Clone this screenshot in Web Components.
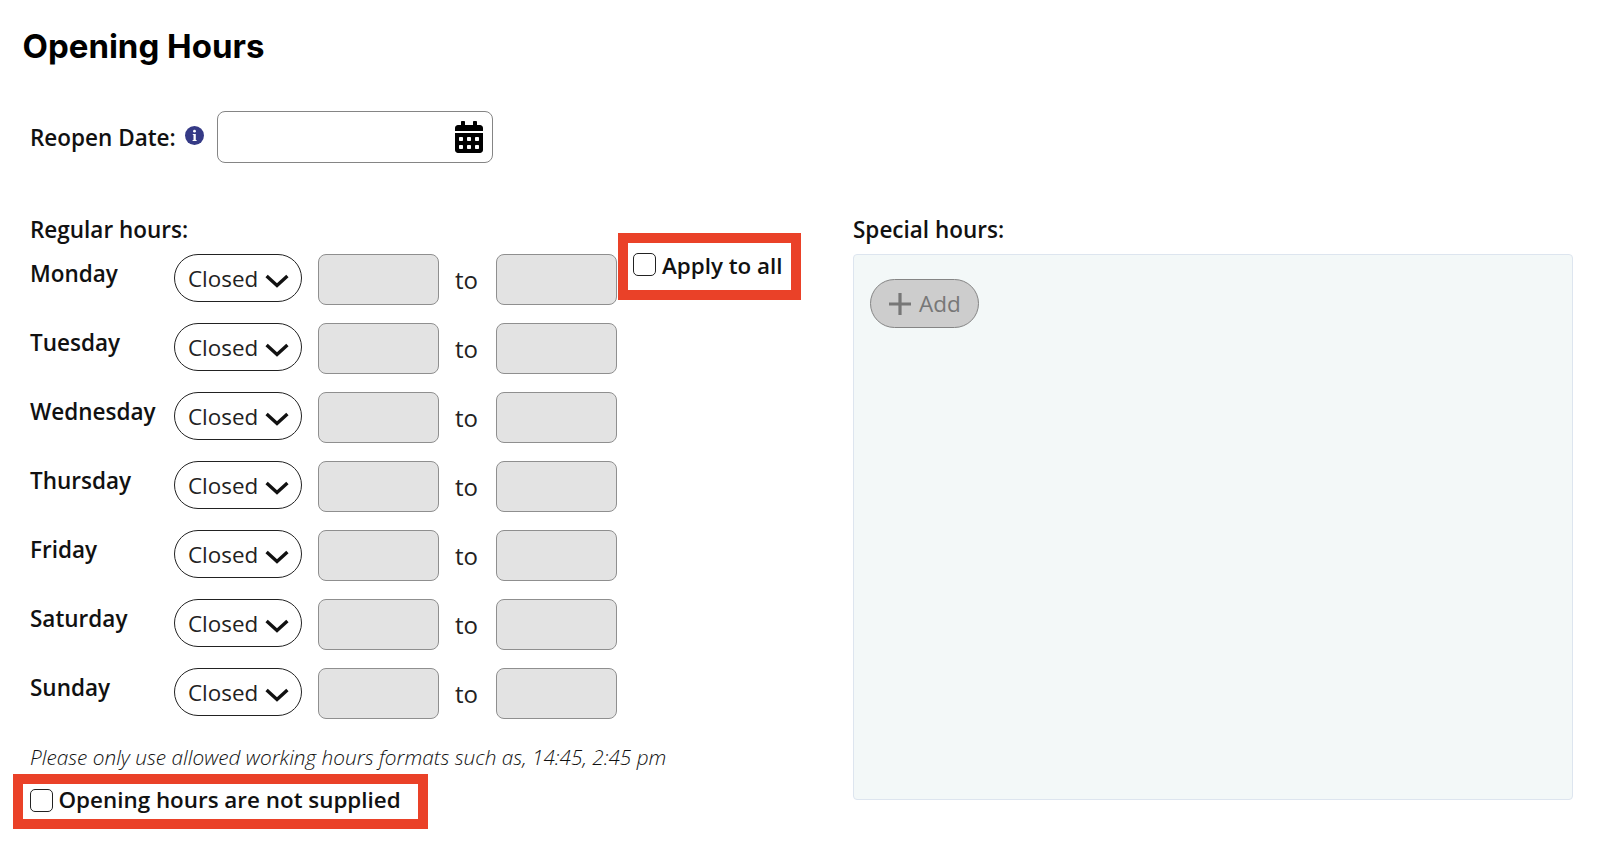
<!DOCTYPE html>
<html>
<head>
<meta charset="utf-8">
<title>Opening Hours</title>
<style>
  body { margin: 0; background: #fff; color: #111; font-family: "Open Sans", sans-serif; }
</style>
</head>
<body>
<opening-hours></opening-hours>
<script>
// small helper so each element gets its own open shadow root
function shadow(el, html) {
  el.attachShadow({ mode: 'open' });
  el.shadowRoot.innerHTML = html;
}

class DateField extends HTMLElement {
  connectedCallback() {
    shadow(this, `
      <style>
        :host { display: flex; align-items: center; justify-content: flex-end; box-sizing: border-box;
          width: 276px; height: 52px; padding-right: 9px; border: 1px solid #858585; border-radius: 8px; background: #fff; }
        svg { width: 28px; height: 32px; display: block; }
      </style>
      <svg viewBox="0 0 448 512"><path fill="#000" d="M0 464c0 26.5 21.5 48 48 48h352c26.5 0 48-21.5 48-48V192H0v272zm320-196c0-6.6 5.4-12 12-12h40c6.6 0 12 5.4 12 12v40c0 6.6-5.4 12-12 12h-40c-6.6 0-12-5.4-12-12v-40zm0 128c0-6.6 5.4-12 12-12h40c6.6 0 12 5.4 12 12v40c0 6.6-5.4 12-12 12h-40c-6.6 0-12-5.4-12-12v-40zM192 268c0-6.6 5.4-12 12-12h40c6.6 0 12 5.4 12 12v40c0 6.6-5.4 12-12 12h-40c-6.6 0-12-5.4-12-12v-40zm0 128c0-6.6 5.4-12 12-12h40c6.6 0 12 5.4 12 12v40c0 6.6-5.4 12-12 12h-40c-6.6 0-12-5.4-12-12v-40zM64 268c0-6.6 5.4-12 12-12h40c6.6 0 12 5.4 12 12v40c0 6.6-5.4 12-12 12H76c-6.6 0-12-5.4-12-12v-40zm0 128c0-6.6 5.4-12 12-12h40c6.6 0 12 5.4 12 12v40c0 6.6-5.4 12-12 12H76c-6.6 0-12-5.4-12-12v-40zM400 64h-48V16c0-8.8-7.2-16-16-16h-32c-8.8 0-16 7.2-16 16v48H160V16c0-8.8-7.2-16-16-16h-32c-8.8 0-16 7.2-16 16v48H48C21.5 64 0 85.5 0 112v48h448v-48c0-26.5-21.5-48-48-48z"/></svg>`);
  }
}

class InfoDot extends HTMLElement {
  connectedCallback() {
    shadow(this, `
      <style>
        :host { display: block; width: 19px; height: 19px; }
        svg { display: block; width: 19px; height: 19px; }
      </style>
      <svg viewBox="0 0 19 19">
        <circle cx="9.5" cy="9.5" r="9.5" fill="#353a86"/>
        <circle cx="9.5" cy="5.2" r="1.4" fill="#fff"/>
        <path fill="#fff" d="M7.800 8h3v6h.8v1H7.600v-1h.9V9H7.800z"/>
      </svg>`);
  }
}

class ClosedSelect extends HTMLElement {
  connectedCallback() {
    shadow(this, `
      <style>
        :host { display: flex; align-items: center; box-sizing: border-box; width: 128px; height: 48px;
          padding-left: 13px; border: 1px solid #222; border-radius: 24px; background: #fff;
          font: 400 22.4px/1 "Open Sans", sans-serif; color: #222; }
        span { margin-top: 2px; }
        svg { display: block; margin-left: 7px; margin-top: 6px; }
      </style>
      <span>Closed</span>
      <svg width="24" height="14" viewBox="0 0 24 14"><path d="M1.600 2l10.400 9.500L22.400 2" fill="none" stroke="#111" stroke-width="3.400"/></svg>`);
  }
}

class TimeBox extends HTMLElement {
  connectedCallback() {
    shadow(this, `
      <style>
        :host { display: block; box-sizing: border-box; width: 121px; height: 51px;
          border: 1px solid #8f8f8f; border-radius: 8px; background: #e3e3e3; }
      </style>`);
  }
}

// the red rectangle somebody drew on the screenshot, with a checkbox inside
class MarkedCheck extends HTMLElement {
  connectedCallback() {
    shadow(this, `
      <style>
        :host { display: flex; align-items: center; box-sizing: border-box; width: fit-content;
          border: 10px solid #ea4128; background: #fff; color: #111;
          font: 600 22.4px/1 "Open Sans", sans-serif; }
        i { display: block; flex: none; box-sizing: border-box; width: 23px; height: 23px; margin-right: 6px;
          border: 1.500px solid #222; border-radius: 5px; background: #fff; }
        span { margin-top: var(--text-nudge, 0); }
      </style>
      <i></i><span><slot></slot></span>`);
  }
}

class DayRow extends HTMLElement {
  connectedCallback() {
    shadow(this, `
      <style>
        :host { display: flex; align-items: flex-start; height: 51px; }
        .day { width: 144px; font: 600 22.5px/30px "Open Sans", sans-serif; color: #111; margin-top: 4.500px; }
        .to { box-sizing: border-box; width: 57px; padding-right: 2px; text-align: center; font: 400 24px/51px "Open Sans", sans-serif; color: #222; }
        closed-select { margin-right: 16px; }
        ::slotted(marked-check) { margin-top: -21px; margin-left: 1px; }
      </style>
      <div class="day"></div>
      <closed-select></closed-select>
      <time-box></time-box>
      <div class="to">to</div>
      <time-box></time-box>
      <slot></slot>`);
    this.shadowRoot.querySelector('.day').textContent = this.getAttribute('day');
  }
}

class AddButton extends HTMLElement {
  connectedCallback() {
    shadow(this, `
      <style>
        :host { display: flex; align-items: center; box-sizing: border-box; width: 109px; height: 49px;
          padding-left: 18px; border: 1px solid #858585; border-radius: 25px; background: #cdcdcd;
          font: 400 22.5px/1 "Open Sans", sans-serif; color: #777; }
        svg { display: block; margin-right: 8px; }
        span { margin-top: 2px; }
      </style>
      <svg width="22" height="22" viewBox="0 0 22 22"><path d="M11 0v22M0 11h22" stroke="#777" stroke-width="3.200" fill="none"/></svg>
      <span>Add</span>`);
  }
}

class SpecialPanel extends HTMLElement {
  connectedCallback() {
    shadow(this, `
      <style>
        :host { display: block; box-sizing: border-box; height: 546px; padding: 24px 16px;
          border: 1px solid #dde5ef; border-radius: 4px; background: #f3f8f8; }
      </style>
      <slot></slot>`);
  }
}

class OpeningHours extends HTMLElement {
  connectedCallback() {
    const days = ['Monday', 'Tuesday', 'Wednesday', 'Thursday', 'Friday', 'Saturday', 'Sunday'];
    shadow(this, `
      <style>
        :host { display: block; box-sizing: border-box; height: 841px; padding: 25.5px 30px 0 22.5px;
          font-family: "Open Sans", sans-serif; color: #111; }
        h1 { margin: 0; font: 700 33px/40px Inter, sans-serif; color: #000; }
        .reopen { display: flex; align-items: center; margin: 45.500px 0 0 7.500px; height: 52px; }
        .reopen b { font: 600 22.5px/30px "Open Sans", sans-serif; margin: 1px 9px 0 0; }
        info-dot { margin-right: 13px; margin-top: -3px; }
        .cols { display: flex; margin: 50px 0 0 7.500px; }
        .left { width: 823px; flex: none; }
        .right { flex: 1; }
        .title { font: 600 22.5px/34px "Open Sans", sans-serif; margin-bottom: 7px; }
        .rows { display: flex; flex-direction: column; gap: 18px; }
        .note { margin-top: 22.600px; font: italic 300 20.800px/30px "Open Sans", sans-serif; color: #111; }
        .none { margin: 2px 0 0 -17.500px; }
      </style>
      <h1>Opening Hours</h1>
      <div class="reopen"><b>Reopen Date:</b><info-dot></info-dot><date-field></date-field></div>
      <div class="cols">
        <div class="left">
          <div class="title">Regular hours:</div>
          <div class="rows">
            ${days.map((d, i) => `<day-row day="${d}">${i === 0 ? '<marked-check style="padding:0 8px 4px 5px;height:67px;--text-nudge:3px">Apply to all</marked-check>' : ''}</day-row>`).join('')}
          </div>
          <div class="note">Please only use allowed working hours formats such as, 14:45, 2:45 pm</div>
          <marked-check class="none" style="padding:0 17px 2px 7px;height:55px">Opening hours are not supplied</marked-check>
        </div>
        <div class="right">
          <div class="title">Special hours:</div>
          <special-panel><add-button></add-button></special-panel>
        </div>
      </div>`);
  }
}

customElements.define('date-field', DateField);
customElements.define('info-dot', InfoDot);
customElements.define('closed-select', ClosedSelect);
customElements.define('time-box', TimeBox);
customElements.define('marked-check', MarkedCheck);
customElements.define('day-row', DayRow);
customElements.define('add-button', AddButton);
customElements.define('special-panel', SpecialPanel);
customElements.define('opening-hours', OpeningHours);
</script>
</body>
</html>
